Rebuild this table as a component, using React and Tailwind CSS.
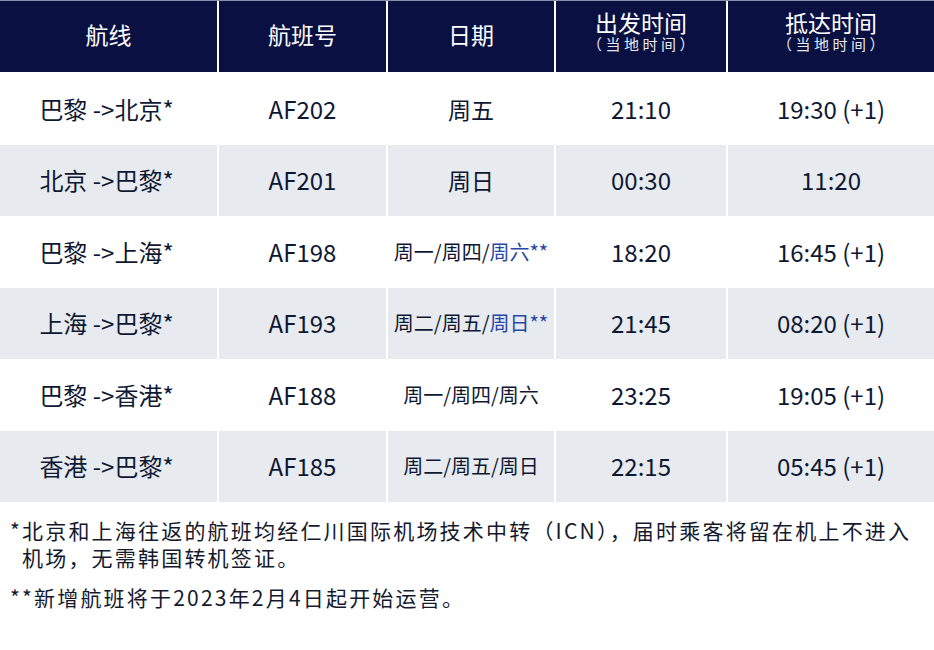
import React from "react";

const rows = [
  { route: "巴黎 ->北京*", no: "AF202", day: [["周五", false]], big: true, dep: "21:10", arr: "19:30 (+1)" },
  { route: "北京 ->巴黎*", no: "AF201", day: [["周日", false]], big: true, dep: "00:30", arr: "11:20" },
  { route: "巴黎 ->上海*", no: "AF198", day: [["周一/周四/", false], ["周六**", true]], dep: "18:20", arr: "16:45 (+1)" },
  { route: "上海 ->巴黎*", no: "AF193", day: [["周二/周五/", false], ["周日**", true]], dep: "21:45", arr: "08:20 (+1)" },
  { route: "巴黎 ->香港*", no: "AF188", day: [["周一/周四/周六", false]], dep: "23:25", arr: "19:05 (+1)" },
  { route: "香港 ->巴黎*", no: "AF185", day: [["周二/周五/周日", false]], dep: "22:15", arr: "05:45 (+1)" },
];

const font = { fontFamily: '"Noto Sans CJK SC", "Noto Sans", sans-serif' };

function Head({ title, sub }) {
  if (sub) {
    return (
      <div className="bg-[#0a1142] text-white flex flex-col items-center h-[71px] pt-[8px]">
        <div className="text-[23px] leading-[26px]">{title}</div>
        <div className="text-[15px] leading-[18px] tracking-[3.5px] pl-[3px] text-[#e6e8f0]">（当地时间）</div>
      </div>
    );
  }
  return (
    <div className="bg-[#0a1142] text-white flex items-center justify-center h-[71px] pb-[6px]">
      <div className="text-[23px] leading-[28px]">{title}</div>
    </div>
  );
}

export default function App() {
  return (
    <div className="w-[934px] h-[650px] bg-white text-[#0f1833]" style={font}>
      <div className="grid grid-cols-[217px_167px_166px_170px_206px] gap-x-[2px] border-t border-[#8a90a8] bg-white">
        <Head title="航线" />
        <Head title="航班号" />
        <Head title="日期" />
        <Head title="出发时间" sub />
        <Head title="抵达时间" sub />
      </div>
      <div className="pt-[1px]">
        {rows.map((r, i) => {
          const bg = i % 2 === 1 ? "bg-[#e7ebef]" : "bg-white";
          const cell = `${bg} flex items-center justify-center h-[71.5px] leading-[30px]`;
          return (
            <div key={i} className="grid grid-cols-[217px_167px_166px_170px_206px] gap-x-[2px]">
              <div className={`${cell} text-[24px] pr-[4px]`}>{r.route}</div>
              <div className={`${cell} text-[24px]`}>{r.no}</div>
              <div className={`${cell} ${r.big ? "text-[23px]" : "text-[20px]"}`}>
                {r.day.map(([t, blue], j) => (
                  <span key={j} className={blue ? "text-[#2a47a6]" : ""}>{t}</span>
                ))}
              </div>
              <div className={`${cell} text-[24px]`}>{r.dep}</div>
              <div className={`${cell} text-[24px]`}>{r.arr}</div>
            </div>
          );
        })}
      </div>
      <div className="px-[10px] pt-[15px] text-[21px] leading-[27px] tracking-[2.2px] text-[#14192e]">
        <div className="whitespace-nowrap">*北京和上海往返的航班均经仁川国际机场技术中转（ICN），届时乘客将留在机上不进入</div>
        <div className="whitespace-nowrap pl-[12px]">机场，无需韩国转机签证。</div>
        <div className="whitespace-nowrap mt-[13px]">**新增航班将于2023年2月4日起开始运营。</div>
      </div>
    </div>
  );
}
